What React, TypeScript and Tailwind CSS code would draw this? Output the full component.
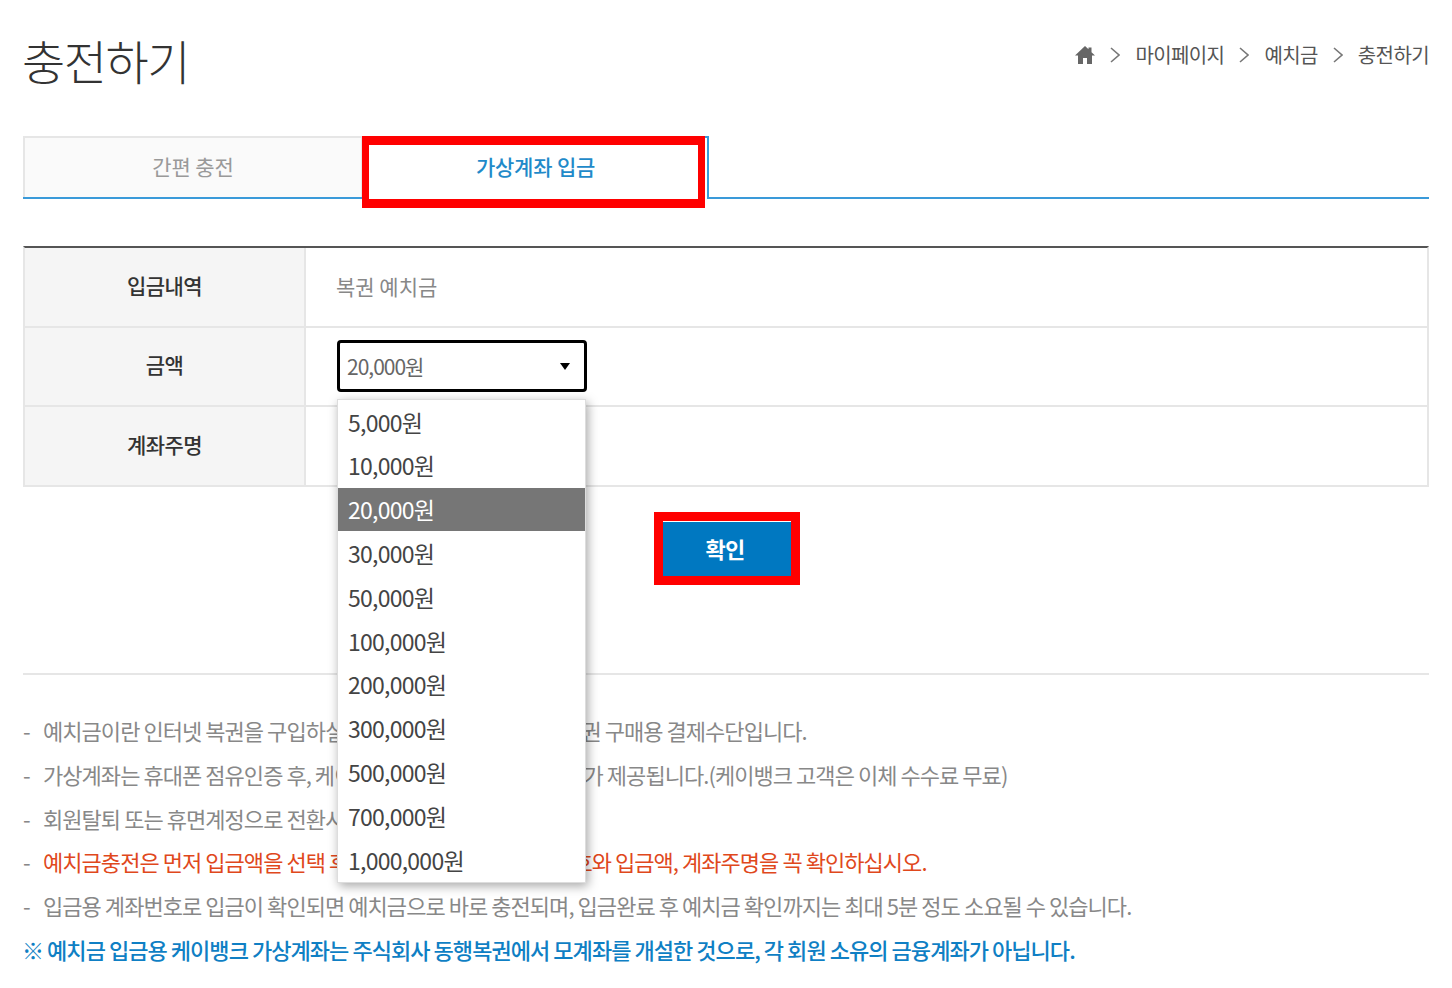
const amounts = ['5,000원', '10,000원', '20,000원', '30,000원', '50,000원', '100,000원', '200,000원', '300,000원', '500,000원', '700,000원', '1,000,000원'];

function Chevron() {
  return (
    <svg viewBox="0 0 10 16" className="w-[10px] h-[16px] mx-[15px]" fill="none" stroke="#777" strokeWidth="1.6">
      <path d="M1 1l8 7-8 7" />
    </svg>
  );
}

function Crumb({ label }: { label: string }) {
  return (
    <>
      <Chevron />
      <span>{label}</span>
    </>
  );
}

function Row({ label, children, last }: { label: string; children?: React.ReactNode; last?: boolean }) {
  return (
    <div className={`flex ${last ? 'h-[78px]' : 'h-[79.5px] border-b-2 border-[#e6e6e6]'}`}>
      <div className="w-[281px] shrink-0 bg-[#f5f5f5] border-r-2 border-[#e6e6e6] flex items-center justify-center pb-[3px] text-[21px] font-medium text-[#333] tracking-[-0.6px]">
        {label}
      </div>
      <div className="flex-1 flex items-center pl-[31px]">{children}</div>
    </div>
  );
}

function Note({ children, className }: { children: React.ReactNode; className?: string }) {
  return (
    <li className="flex h-[43.7px] items-center">
      <span className="w-[20px] shrink-0 text-[#888]">-</span>
      <span className={className ?? 'text-[#888]'}>{children}</span>
    </li>
  );
}

export default function App() {
  return (
    <div className="relative w-[1452px] h-[988px] bg-white overflow-hidden px-[23px] font-['Noto_Sans_CJK_KR',sans-serif]">
      <div className="flex items-start justify-between pt-[30px] h-[136px]">
        <h1 className="text-[47px] leading-[60px] font-light text-[#333] tracking-[-1.5px] -ml-[1px]">충전하기</h1>
        <div className="flex items-center h-[50px] text-[20px] text-[#555] tracking-[-0.6px]">
          <svg viewBox="0 0 20 18" className="w-[20px] h-[18px]" fill="#666">
            <path d="M10 0L0 9.5h3V18h5v-6h4v6h5V9.500h3L16.500 6.200V1.500h-3v1.800z" />
          </svg>
          <Crumb label="마이페이지" />
          <Crumb label="예치금" />
          <Crumb label="충전하기" />
        </div>
      </div>

      <div className="flex h-[63px] border-b-2 border-[#3a9ad9]">
        <div className="w-[340px] bg-[#fafafa] border-2 border-b-0 border-[#e6e6e6] flex items-center justify-center pb-[2px] text-[21px] text-[#999] tracking-[-0.1px]">
          간편 충전
        </div>
        <div className="w-[346px] bg-white border-t-2 border-r-2 border-[#3a9ad9] mb-[-2px] flex items-center justify-center pb-[4px] pl-[1px] text-[21px] font-medium text-[#1f8ac9] tracking-[-0.2px]">
          가상계좌 입금
        </div>
      </div>

      <div className="mt-[47px] border-t-2 border-[#555] border-x-2 border-x-[#e6e6e6] border-b-2 border-b-[#e6e6e6]">
        <Row label="입금내역">
          <span className="-ml-[1px] text-[21px] text-[#888] tracking-[0px]">복권 예치금</span>
        </Row>
        <Row label="금액">
          <div className="w-[250px] h-[52px] rounded-[4px] border-[3px] border-black flex items-center justify-between pl-[7px] pr-[14px] text-[21px] text-[#666] tracking-[-1px]">
            20,000원
            <span className="w-0 h-0 border-x-[5px] border-x-transparent border-t-[7px] border-t-black" />
          </div>
        </Row>
        <Row label="계좌주명" last />
      </div>

      <div className="flex justify-center mt-[35px] pl-[3px]">
        <button className="w-[129px] h-[54px] bg-[#0078c1] text-white text-[22px] font-bold tracking-[-0.8px] pr-[5px] pb-[2px]">확인</button>
      </div>

      <div className="mt-[97px] border-t-2 border-[#e6e6e6]" />

      <ul className="mt-[34px] text-[22px] tracking-[-0.95px] whitespace-nowrap">
        <Note>예치금이란 인터넷 복권을 구입하실 때 사용하실 수 있는 동행복<span className="ml-[5px]">권 구매용 결제수단입니다.</span></Note>
        <Note>가상계좌는 휴대폰 점유인증 후, 케이뱅크 전용의 가상계좌 번호<span className="ml-[6px]">가 제공됩니다.(케이뱅크 고객은 이체 수수료 무료)</span></Note>
        <Note>회원탈퇴 또는 휴면계정으로 전환시 가상계좌는 해지됩니다.</Note>
        <Note className="text-[#e0481c]">예치금충전은 먼저 입금액을 선택 후 발급받으신 가상계좌의 번호와 입금액, 계좌주명을 꼭 확인하십시오.</Note>
        <Note>입금용 계좌번호로 입금이 확인되면 예치금으로 바로 충전되며, 입금완료 후 예치금 확인까지는 최대 5분 정도 소요될 수 있습니다.</Note>
        <li className="flex h-[43.7px] items-center -ml-[1px] text-[#0f7fc4] font-medium">※ 예치금 입금용 케이뱅크 가상계좌는 주식회사 동행복권에서 모계좌를 개설한 것으로, 각 회원 소유의 금융계좌가 아닙니다.</li>
      </ul>

      {/* open select list */}
      <div className="absolute left-[337px] top-[399px] w-[249px] h-[484px] bg-white border border-[#ddd] shadow-[2px_3px_10px_rgba(0,0,0,0.35)]">
        {amounts.map((a) => (
          <div
            key={a}
            className={`h-[43.8px] pl-[10px] flex items-center text-[23px] tracking-[-0.75px] ${a === '20,000원' ? 'bg-[#767676] text-white' : 'text-[#444]'}`}
          >
            {a}
          </div>
        ))}
      </div>

      {/* red annotations */}
      <div className="absolute left-[362px] top-[136px] w-[343px] h-[72px] border-[#ff0000] border-x-[7px] border-t-[9px] border-b-[9px]" />
      <div className="absolute left-[654px] top-[512px] w-[146px] h-[73px] border-[9px] border-[#ff0000]" />
    </div>
  );
}
